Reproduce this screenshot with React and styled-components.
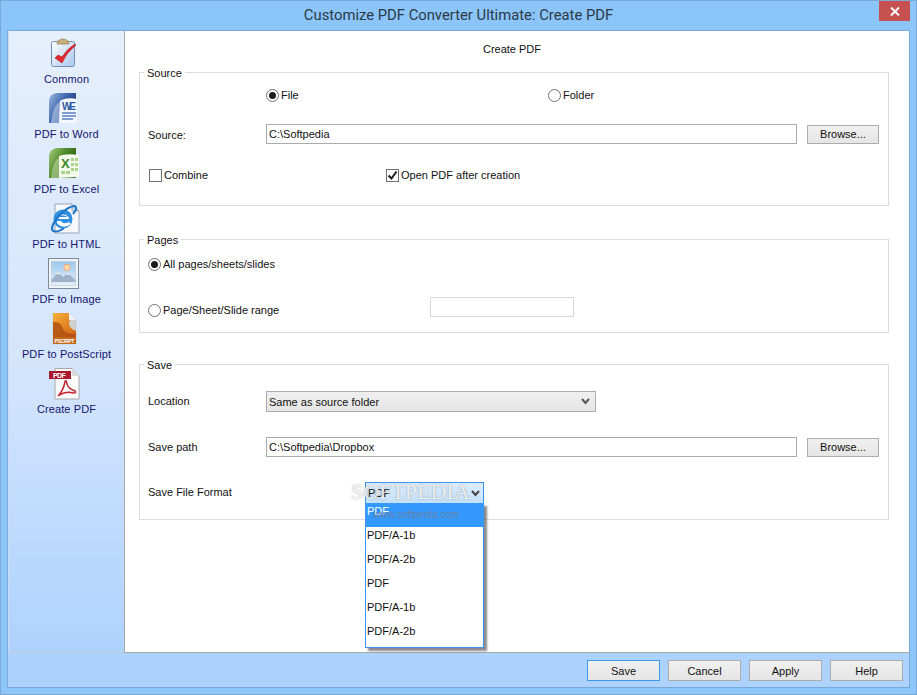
import React from "react";
import styled, { createGlobalStyle } from "styled-components";

const GlobalStyle = createGlobalStyle`
  html, body {
    margin: 0;
    padding: 0;
    background: #8cc5fa;
  }
  body {
    font-family: "Liberation Sans", Arial, sans-serif;
    font-size: 11px;
    color: #111;
  }
  * {
    box-sizing: border-box;
  }
`;

const Window = styled.div`
  width: 917px;
  height: 695px;
  background: #8cc5fa;
  border: 1px solid #7aa9d8;
  display: flex;
  flex-direction: column;
  overflow: hidden;
`;

const TitleBar = styled.div`
  height: 29px;
  flex: none;
  position: relative;
  text-align: center;
  font-family: Roboto, sans-serif;
  font-size: 14.8px;
  line-height: 29px;
  color: #2b3a48;
`;

const CloseButton = styled.div`
  position: absolute;
  top: 0;
  right: 6px;
  width: 31px;
  height: 20px;
  background: #c75050;
  display: flex;
  align-items: center;
  justify-content: center;
`;

const Frame = styled.div`
  flex: 1;
  margin: 0 6px 6px;
  border: 1px solid #7aa9d8;
  background: #aed2fe;
  display: flex;
  flex-direction: column;
`;

const Main = styled.div`
  height: 622px;
  flex: none;
  display: flex;
`;

const Sidebar = styled.nav`
  width: 116px;
  flex: none;
  padding-top: 7px;
  background: linear-gradient(180deg, #e6effc 0%, #d3e5fc 55%, #aed2fe 100%);
  border-left: 1px solid #c9dcf4;
  border-bottom: 1px solid #bccde4;
  display: flex;
  flex-direction: column;
`;

const NavItem = styled.div`
  height: 55px;
  flex: none;
  display: flex;
  flex-direction: column;
  align-items: center;
  color: #14146e;
  line-height: 16px;
  letter-spacing: 0.1px;
  white-space: nowrap;
  svg {
    display: block;
    margin-left: -6px;
    margin-bottom: 1px;
  }
`;

const Content = styled.main`
  flex: 1;
  background: #fff;
  border-left: 1px solid #a8a8a8;
  border-bottom: 1px solid #a8a8a8;
  padding: 10px 20px 0 14px;
`;

const PageTitle = styled.div`
  height: 16px;
  line-height: 16px;
  text-align: center;
  margin-bottom: 15px;
  margin-left: -4px;
`;

const Group = styled.section`
  position: relative;
  border: 1px solid #dcdcdc;
  padding: ${(p) => p.$top}px 9px ${(p) => p.$bottom}px 8px;
  margin-bottom: ${(p) => p.$after || 0}px;
`;

const Legend = styled.div`
  position: absolute;
  top: -8px;
  left: 4px;
  padding: 0 3px;
  background: #fff;
  line-height: 16px;
`;

const Row = styled.div`
  position: relative;
  height: ${(p) => p.$height || 20}px;
  margin-top: ${(p) => p.$top || 0}px;
  display: flex;
  align-items: ${(p) => p.$align || "center"};
`;

const Label = styled.div`
  width: ${(p) => p.$width || 118}px;
  flex: none;
  margin-top: ${(p) => p.$nudge || 0}px;
`;

const Option = styled.label`
  width: ${(p) => p.$width || "auto"};
  height: ${(p) => p.$height || 20}px;
  flex: none;
  display: flex;
  align-items: center;
  gap: 2px;
  white-space: nowrap;
`;

const Radio = styled.span`
  width: 13px;
  height: 13px;
  flex: none;
  border: 1px solid #707070;
  border-radius: 50%;
  background: #fff;
  display: flex;
  align-items: center;
  justify-content: center;
  &::after {
    content: "";
    width: 7px;
    height: 7px;
    border-radius: 50%;
    background: ${(p) => (p.$on ? "#1c1c1c" : "transparent")};
  }
`;

const Check = styled.span`
  width: 13px;
  height: 13px;
  flex: none;
  margin-left: 1px;
  border: 1px solid #707070;
  background: #fff;
  display: flex;
  align-items: center;
  justify-content: center;
`;

const TextInput = styled.input`
  height: 20px;
  width: ${(p) => p.$width || "531px"};
  flex: none;
  padding: 0 2px;
  border: 1px solid ${(p) => p.$border || "#ababab"};
  background: #fff;
  font: inherit;
  color: #111;
  outline: none;
`;

const Button = styled.button`
  width: ${(p) => p.$width || 73}px;
  height: ${(p) => p.$height || 21}px;
  flex: none;
  margin-left: ${(p) => p.$left || 0}px;
  padding: 0;
  border: 1px solid ${(p) => (p.$primary ? "#3c99ee" : "#acacac")};
  background: linear-gradient(180deg, #f0f0f0, #e5e5e5);
  font: inherit;
  color: #111;
`;

const Select = styled.div`
  width: 330px;
  height: 21px;
  padding: 0 2px;
  flex: none;
  border: 1px solid #acacac;
  background: linear-gradient(180deg, #f0f0f0, #e5e5e5);
  display: flex;
  align-items: center;
  justify-content: space-between;
  svg {
    margin-right: 3px;
  }
`;

const ComboWrap = styled.div`
  position: relative;
  width: 119px;
  height: 22px;
  flex: none;
`;

const Combo = styled.div`
  height: 22px;
  padding: 0 3px 0 2px;
  border: 1px solid #3d94ee;
  background: linear-gradient(180deg, #dcedfc, #c4e0f9);
  display: flex;
  align-items: center;
  justify-content: space-between;
`;

const DropList = styled.ul`
  position: absolute;
  top: 21px;
  left: 0;
  width: 119px;
  height: 145px;
  margin: 0;
  padding: 0;
  list-style: none;
  background: #fff;
  border: 1px solid #3d94ee;
  border-top: none;
  box-shadow: 3px 3px 2px rgba(60, 60, 60, 0.6);
`;

const DropItem = styled.li`
  height: 24px;
  padding: 0 1px;
  line-height: 17px;
  background: ${(p) => (p.$active ? "#3399ff" : "transparent")};
  color: ${(p) => (p.$active ? "#fff" : "#111")};
`;

const Watermark = styled.div`
  position: absolute;
  left: -14px;
  top: -3px;
  font-family: "Liberation Serif", serif;
  font-size: 22px;
  line-height: 26px;
  color: rgba(255, 255, 255, 0.8);
  text-shadow: 0 0 2px rgba(100, 100, 100, 0.6);
  white-space: nowrap;
  pointer-events: none;
`;

const WatermarkUrl = styled.div`
  position: absolute;
  left: 8px;
  top: 25px;
  font-size: 10px;
  line-height: 16px;
  color: rgba(110, 125, 150, 0.9);
  white-space: nowrap;
  pointer-events: none;
`;

const Footer = styled.footer`
  flex: 1;
  padding: 7px 6px 0 0;
  display: flex;
  justify-content: flex-end;
  gap: 8px;
`;

function CommonIcon() {
  return (
    <svg width="32" height="32" viewBox="0 0 32 32">
      <defs>
        <linearGradient id="clipBoard" x1="0" y1="0" x2="1" y2="1">
          <stop offset="0" stopColor="#ffffff" />
          <stop offset="1" stopColor="#a9c6ea" />
        </linearGradient>
      </defs>
      <rect x="3.5" y="3.5" width="23" height="25" rx="2" fill="url(#clipBoard)" stroke="#6f8fb8" />
      <path d="M9 6 L10 3 Q15 -1 20 3 L21 6 Z" fill="#c9b27c" stroke="#8f7a4a" strokeWidth="0.7" />
      <path d="M7 20 L14 25 Q18 15 28 7 L27 6 Q19 11 14 19 L10 17 Z" fill="#e3262b" stroke="#b01a1e" strokeWidth="0.6" />
    </svg>
  );
}

function WordIcon() {
  return (
    <svg width="32" height="32" viewBox="0 0 32 32">
      <defs>
        <linearGradient id="wordCover" x1="0" y1="0" x2="1" y2="0.6">
          <stop offset="0" stopColor="#9db6e2" />
          <stop offset="0.5" stopColor="#3f68ad" />
          <stop offset="1" stopColor="#1c3a78" />
        </linearGradient>
      </defs>
      <path d="M1 30 L1 7 Q2 1 9 0 L28 0 L28 30 Z" fill="url(#wordCover)" />
      <path d="M3 30 Q5 12 12 9 L12 30 Z" fill="#c8d6f0" opacity="0.55" />
      <path d="M12 8 Q18 4 29 6 L29 30 L11 30 Z" fill="#f4f7fd" />
      <text x="14" y="17" fontFamily="Liberation Sans" fontWeight="700" fontSize="10" fill="#2d5aa6" textLength="14">WE</text>
      <path d="M14 20 H28 M14 23 H28 M14 26 H25" stroke="#5a7fc2" strokeWidth="1.4" />
    </svg>
  );
}

function ExcelIcon() {
  return (
    <svg width="32" height="32" viewBox="0 0 32 32">
      <defs>
        <linearGradient id="excelCover" x1="0" y1="0" x2="1" y2="0.6">
          <stop offset="0" stopColor="#a8d080" />
          <stop offset="0.5" stopColor="#4f8a2a" />
          <stop offset="1" stopColor="#2a5a12" />
        </linearGradient>
      </defs>
      <path d="M1 30 L1 7 Q2 1 9 0 L28 0 L28 30 Z" fill="url(#excelCover)" />
      <path d="M3 30 Q5 12 12 9 L12 30 Z" fill="#d2e8bc" opacity="0.5" />
      <path d="M11 8 Q18 5 31 7 L31 29 L11 30 Z" fill="#f2f8ea" />
      <text x="13" y="20" fontFamily="Liberation Sans" fontWeight="700" fontSize="13" fill="#3f8a1f">X</text>
      <path d="M23 10 h3 v3 h-3 z M27 10 h3 v3 h-3 z M23 15 h3 v3 h-3 z M27 15 h3 v3 h-3 z M23 20 h3 v3 h-3 z M27 20 h3 v3 h-3 z M13 23 h4 v3 h-4 z M18 23 h4 v3 h-4 z" fill="#a9d489" />
    </svg>
  );
}

function HtmlIcon() {
  return (
    <svg width="32" height="32" viewBox="0 0 32 32">
      <path d="M7 1 H24 L31 8 V30 H7 Z" fill="#f6f8fc" stroke="#9aa7ba" />
      <path d="M24 1 V8 H31 Z" fill="#cfdbee" stroke="#9aa7ba" />
      <circle cx="15" cy="16" r="9.5" fill="#2f8fe0" />
      <path d="M9 14.5 Q15 8 21 14.5 L21 16 H9 Z" fill="#ffffff" />
      <path d="M10.5 14 Q15 10.5 19.5 14 Z" fill="#2f8fe0" />
      <path d="M9 18 H13 Q15 22 21 19 L23 21 Q15 27 9 20 Z" fill="#ffffff" />
      <path d="M4 27 Q3 22 11 13 Q20 3 27 3 Q30 5 25 11" fill="none" stroke="#1d74c8" strokeWidth="2" />
      <path d="M4 27 Q8 31 16 25" fill="none" stroke="#1d74c8" strokeWidth="2" />
    </svg>
  );
}

function ImageIcon() {
  return (
    <svg width="32" height="32" viewBox="0 0 32 32">
      <defs>
        <linearGradient id="imageSky" x1="0" y1="0" x2="0" y2="1">
          <stop offset="0" stopColor="#9cc8ef" />
          <stop offset="1" stopColor="#e6f1fb" />
        </linearGradient>
      </defs>
      <rect x="0.5" y="0.5" width="30" height="30" fill="#eef3f8" stroke="#7d8c96" />
      <rect x="3.5" y="3.5" width="24" height="24" fill="url(#imageSky)" stroke="#b9c6d0" strokeWidth="0.6" />
      <circle cx="19" cy="9.5" r="3.2" fill="#fbd9b0" stroke="#f1955a" strokeWidth="0.8" />
      <path d="M3.5 22 L10 14 L15 19 L20 15 L27.5 22 V24 H3.5 Z" fill="#9fb2c9" />
      <path d="M8 16.5 L10 14 L12.5 16.5 L10 16 Z M18 16.5 L20 15 L22.5 17 L20 16.5 Z" fill="#ffffff" />
    </svg>
  );
}

function PostScriptIcon() {
  return (
    <svg width="32" height="32" viewBox="0 0 32 32">
      <defs>
        <linearGradient id="psPage" x1="0" y1="0" x2="1" y2="1">
          <stop offset="0" stopColor="#f4b13c" />
          <stop offset="1" stopColor="#d4600f" />
        </linearGradient>
      </defs>
      <path d="M5 0 H21 L28 7 V31 H5 Z" fill="#cfcfcf" stroke="#bdbdbd" strokeWidth="0.5" />
      <path d="M5 0 H21 L22 7 Q18 14 28 18 V24 H5 Z" fill="url(#psPage)" />
      <path d="M5 9 Q13 8 15 16 Q17 21 28 21 V24 H5 Z" fill="#a94a10" opacity="0.75" />
      <path d="M21 0 L28 7 H21 Z" fill="#f1f1f1" />
      <rect x="5" y="24" width="23" height="7" fill="#c56a1c" />
      <text x="6.5" y="29.5" fontFamily="Liberation Sans" fontWeight="700" fontSize="5.2" fill="#fff" textLength="20">PSCRIPT</text>
    </svg>
  );
}

function PdfIcon() {
  return (
    <svg width="32" height="32" viewBox="0 0 32 32">
      <path d="M7 0.5 H24 L31 8 V31 H7 Z" fill="#fbfbfb" stroke="#a8a8a8" />
      <path d="M24 0.5 V8 H31 Z" fill="#dcdcdc" />
      <rect x="1" y="3" width="22" height="8" fill="#a8192e" />
      <text x="5" y="10" fontFamily="Liberation Sans" fontWeight="700" fontSize="7" fill="#fff" textLength="13">PDF</text>
      <path d="M10 28 Q15 23 17 14 Q17.5 11 18.5 14 Q19 20 27 23 Q29 25 25 25 Q18 23 11 27" fill="none" stroke="#c8202f" strokeWidth="1.5" />
    </svg>
  );
}

function Chevron({ color }) {
  return (
    <svg width="9" height="7" viewBox="0 0 9 7">
      <path d="M1 1 L4.5 5 L8 1" fill="none" stroke={color} strokeWidth="2" />
    </svg>
  );
}

const navItems = [
  { label: "Common", Icon: CommonIcon },
  { label: "PDF to Word", Icon: WordIcon },
  { label: "PDF to Excel", Icon: ExcelIcon },
  { label: "PDF to HTML", Icon: HtmlIcon },
  { label: "PDF to Image", Icon: ImageIcon },
  { label: "PDF to PostScript", Icon: PostScriptIcon },
  { label: "Create PDF", Icon: PdfIcon },
];

const formats = ["PDF", "PDF/A-1b", "PDF/A-2b", "PDF", "PDF/A-1b", "PDF/A-2b"];

export default function App() {
  return (
    <>
      <GlobalStyle />
      <Window>
        <TitleBar>
          Customize PDF Converter Ultimate: Create PDF
          <CloseButton>
            <svg width="10" height="9" viewBox="0 0 10 9">
              <path d="M1 0.5 L9 8.5 M9 0.5 L1 8.5" stroke="#fff" strokeWidth="2" />
            </svg>
          </CloseButton>
        </TitleBar>
        <Frame>
          <Main>
            <Sidebar>
              {navItems.map(({ label, Icon }) => (
                <NavItem key={label}>
                  <Icon />
                  {label}
                </NavItem>
              ))}
            </Sidebar>
            <Content>
              <PageTitle>Create PDF</PageTitle>

              <Group $top={12} $bottom={20} $after={33}>
                <Legend>Source</Legend>
                <Row>
                  <Label />
                  <Option $width="282px">
                    <Radio $on />
                    File
                  </Option>
                  <Option>
                    <Radio />
                    Folder
                  </Option>
                </Row>
                <Row $top={19}>
                  <Label $nudge={2}>Source:</Label>
                  <TextInput readOnly value="C:\Softpedia" />
                  <Button $width={72} $height={19} $left={10}>Browse...</Button>
                </Row>
                <Row $top={21}>
                  <Option $width="237px">
                    <Check />
                    Combine
                  </Option>
                  <Option>
                    <Check>
                      <svg width="11" height="11" viewBox="0 0 11 11">
                        <path d="M1.5 5.5 L4.5 8.5 L9.5 1.5" fill="none" stroke="#1c1c1c" strokeWidth="2" />
                      </svg>
                    </Check>
                    Open PDF after creation
                  </Option>
                </Row>
              </Group>

              <Group $top={14} $bottom={9} $after={31}>
                <Legend>Pages</Legend>
                <Row>
                  <Option>
                    <Radio $on />
                    All pages/sheets/slides
                  </Option>
                </Row>
                <Row $top={23} $height={26} $align="flex-start">
                  <Option $width="282px" $height={26}>
                    <Radio />
                    Page/Sheet/Slide range
                  </Option>
                  <TextInput readOnly $width="144px" $border="#d9d9d9" />
                </Row>
              </Group>

              <Group $top={26} $bottom={15}>
                <Legend>Save</Legend>
                <Row $height={21}>
                  <Label $nudge={-2}>Location</Label>
                  <Select>
                    Same as source folder
                    <Chevron color="#555" />
                  </Select>
                </Row>
                <Row $top={25}>
                  <Label>Save path</Label>
                  <TextInput readOnly value="C:\Softpedia\Dropbox" />
                  <Button $width={72} $height={19} $left={10}>Browse...</Button>
                </Row>
                <Row $top={25} $height={22}>
                  <Label $width={217} $nudge={-2}>Save File Format</Label>
                  <ComboWrap>
                    <Combo>
                      PDF
                      <Chevron color="#444" />
                    </Combo>
                    <DropList>
                      {formats.map((format, i) => (
                        <DropItem key={i} $active={i === 0}>{format}</DropItem>
                      ))}
                    </DropList>
                    <Watermark>SOFTPEDIA</Watermark>
                    <WatermarkUrl>www.softpedia.com</WatermarkUrl>
                  </ComboWrap>
                </Row>
              </Group>
            </Content>
          </Main>
          <Footer>
            <Button $primary>Save</Button>
            <Button>Cancel</Button>
            <Button>Apply</Button>
            <Button>Help</Button>
          </Footer>
        </Frame>
      </Window>
    </>
  );
}
